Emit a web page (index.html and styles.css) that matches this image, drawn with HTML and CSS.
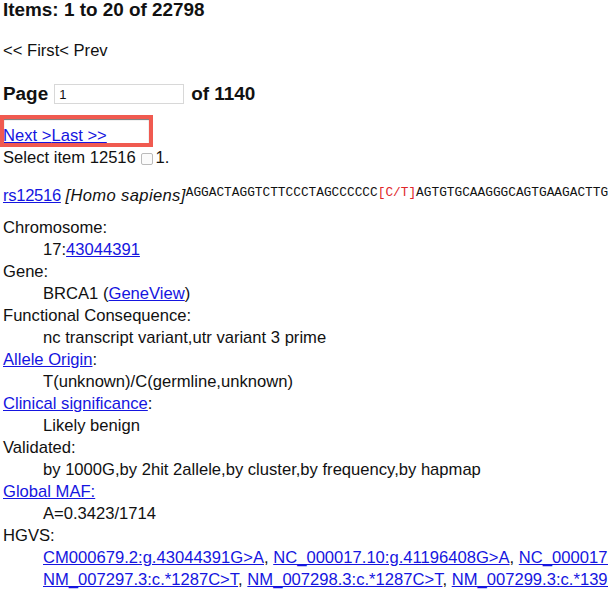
FILE: index.html
```html
<!DOCTYPE html>
<html>
<head>
<meta charset="utf-8">
<link rel="stylesheet" href="styles.css">
</head>
<body>
<div class="page">
  <h3 class="items">Items: 1 to 20 of 22798</h3>
  <p class="nav">&lt;&lt; First&lt; Prev</p>
  <h3 class="pager">Page <input class="page-input" type="text" value="1"> of 1140</h3>
  <p class="nav-next"><a href="#">Next &gt;</a><a href="#">Last &gt;&gt;</a></p>
  <p class="select">Select item 12516 <span class="check"></span>1.</p>
  <p class="rsline"><a href="#">rs12516</a> <i>[Homo sapiens]</i><span class="seq">AGGACTAGGTCTTCCCTAGCCCCCC<span class="snp">[C/T]</span>AGTGTGCAAGGGCAGTGAAGACTTGGATTTCTGAAG</span></p>
  <dl class="info">
    <dt>Chromosome:</dt>
    <dd>17:<a href="#">43044391</a></dd>
    <dt>Gene:</dt>
    <dd>BRCA1 (<a href="#">GeneView</a>)</dd>
    <dt>Functional Consequence:</dt>
    <dd>nc transcript variant,utr variant 3 prime</dd>
    <dt><a href="#">Allele Origin</a>:</dt>
    <dd>T(unknown)/C(germline,unknown)</dd>
    <dt><a href="#">Clinical significance</a>:</dt>
    <dd>Likely benign</dd>
    <dt>Validated:</dt>
    <dd>by 1000G,by 2hit 2allele,by cluster,by frequency,by hapmap</dd>
    <dt><a href="#">Global MAF:</a></dt>
    <dd>A=0.3423/1714</dd>
    <dt>HGVS:</dt>
    <dd class="hgvs"><a href="#">CM000679.2:g.43044391G&gt;A</a>, <a href="#">NC_000017.10:g.41196408G&gt;A</a>, <a href="#">NC_000017.11:g.43044391G&gt;A</a>, <a href="#">NG_005905.2:g.172193C&gt;T</a>,<br><a href="#">NM_007297.3:c.*1287C&gt;T</a>, <a href="#">NM_007298.3:c.*1287C&gt;T</a>, <a href="#">NM_007299.3:c.*1393C&gt;T</a>, <a href="#">NM_007300.3:c.*1287C&gt;T</a></dd>
  </dl>
  <div class="highlight"></div>
</div>
</body>
</html>
```
FILE: styles.css
```css
html, body {
  margin: 0;
  padding: 0;
  overflow: hidden;
  background: #fff;
}
body {
  font-family: "Liberation Sans", Arial, Helvetica, sans-serif;
  font-size: 16.6px;
  line-height: 22px;
  color: #111;
}
.page {
  position: relative;
  padding-left: 3px;
  width: 1100px;
}
a {
  color: #1515e0;
  text-decoration: underline;
}
h3 {
  font-size: 18.9px;
  font-weight: bold;
  margin: 0;
  line-height: 22px;
}
.items {
  margin-top: -1px;
}
.nav {
  margin: 19px 0 0;
}
.pager {
  margin-top: 21px;
  display: flex;
  align-items: center;
}
.page-input {
  width: 130px;
  height: 20px;
  box-sizing: border-box;
  border: 1px solid #d8d8d8;
  margin: 0 7px 0 6px;
  padding: 0 4px;
  font-family: "Liberation Sans", Arial, sans-serif;
  font-size: 13px;
  color: #111;
  background: #fff;
}
.nav-next {
  margin: 20px 0 0;
}
.select {
  margin: 0;
  display: flex;
  align-items: center;
  white-space: pre;
}
.check {
  display: inline-block;
  width: 10px;
  height: 10px;
  border: 1px solid #bbb;
  border-radius: 2px;
  margin: 2px 2px 0 1px;
  background: #fbfbfb;
}
.rsline {
  margin: 16px 0 0;
  white-space: nowrap;
}
.rsline a {
  letter-spacing: -0.3px;
}
.rsline i {
  letter-spacing: 0.35px;
}
.seq {
  font-family: "Liberation Mono", "Courier New", monospace;
  font-size: 12.8px;
  letter-spacing: 0;
  vertical-align: 5px;
  line-height: 10px;
  color: #111;
}
.snp {
  color: #e0262a;
}
.info {
  margin: 10px 0 0;
}
.info dt {
  margin: 0;
}
.info dd {
  margin: 0 0 0 40px;
  white-space: nowrap;
}
.highlight {
  position: absolute;
  left: 0;
  top: 116px;
  width: 153px;
  height: 32px;
  box-sizing: border-box;
  border: 4px solid #f05a50;
  box-shadow: inset 0 1px 1px rgba(60, 60, 60, 0.7);
}
```
